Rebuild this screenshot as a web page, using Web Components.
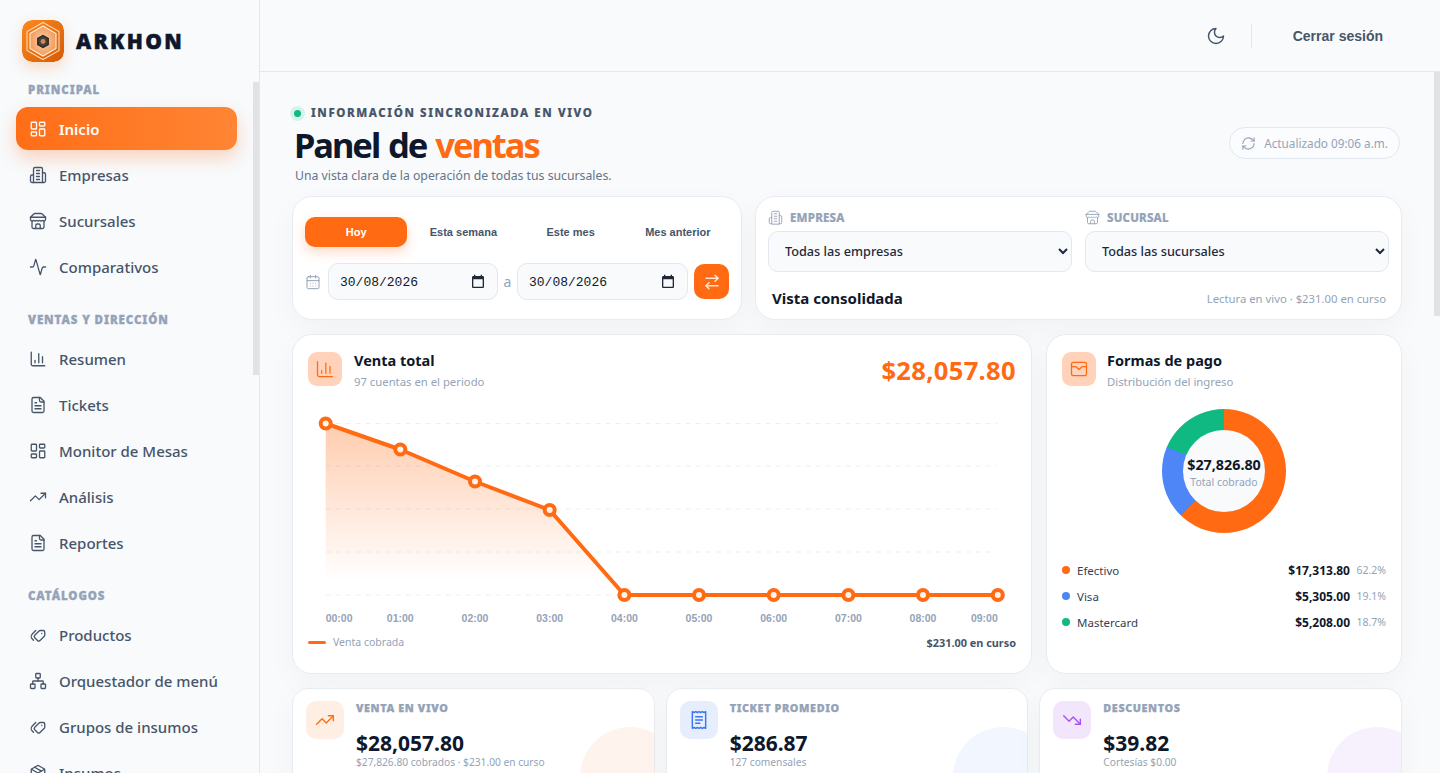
<!DOCTYPE html>
<html lang="es-MX">
<head>
<meta charset="utf-8">
<title>Arkhon</title>
<style>
html,body{margin:0;height:100%;overflow:hidden;background:#f8fafc;font-family:"Noto Sans",sans-serif}
</style>
</head>
<body>
<app-shell>
  <side-nav slot="side">
    <nav-section label="PRINCIPAL">
      <nav-item icon="dash" active>Inicio</nav-item>
      <nav-item icon="building">Empresas</nav-item>
      <nav-item icon="store">Sucursales</nav-item>
      <nav-item icon="activity">Comparativos</nav-item>
    </nav-section>
    <nav-section label="VENTAS Y DIRECCIÓN">
      <nav-item icon="bars">Resumen</nav-item>
      <nav-item icon="file">Tickets</nav-item>
      <nav-item icon="dash">Monitor de Mesas</nav-item>
      <nav-item icon="up">Análisis</nav-item>
      <nav-item icon="file">Reportes</nav-item>
    </nav-section>
    <nav-section label="CATÁLOGOS">
      <nav-item icon="tags">Productos</nav-item>
      <nav-item icon="network">Orquestador de menú</nav-item>
      <nav-item icon="tags">Grupos de insumos</nav-item>
      <nav-item icon="package">Insumos</nav-item>
    </nav-section>
  </side-nav>
  <top-bar slot="top"></top-bar>
  <page-head></page-head>
  <filter-row>
    <date-filter slot="a"></date-filter>
    <scope-filter slot="b"></scope-filter>
  </filter-row>
  <chart-row>
    <sales-chart slot="a"></sales-chart>
    <pay-donut slot="b"></pay-donut>
  </chart-row>
  <kpi-row>
    <kpi-card label="VENTA EN VIVO" value="$28,057.80" sub="$27,826.80 cobrados · $231.00 en curso" icon="up" color="#f97316" tint="#ffeee3" blob="#fff4ed"></kpi-card>
    <kpi-card label="TICKET PROMEDIO" value="$286.87" sub="127 comensales" icon="receipt" color="#3b76f0" tint="#e6eefd" blob="#f2f6fe"></kpi-card>
    <kpi-card label="DESCUENTOS" value="$39.82" sub="Cortesías $0.00" icon="down" color="#a855f7" tint="#f1e6fc" blob="#f7f1fd"></kpi-card>
  </kpi-row>
</app-shell>

<script>
const ICONS={
dash:'<rect x="3" y="3" width="7" height="9" rx="1"/><rect x="14" y="3" width="7" height="5" rx="1"/><rect x="14" y="12" width="7" height="9" rx="1"/><rect x="3" y="16" width="7" height="5" rx="1"/>',
building:'<path d="M6 22V4a2 2 0 0 1 2-2h8a2 2 0 0 1 2 2v18Z"/><path d="M6 12H4a2 2 0 0 0-2 2v6a2 2 0 0 0 2 2h2"/><path d="M18 9h2a2 2 0 0 1 2 2v9a2 2 0 0 1-2 2h-2"/><path d="M10 6h4"/><path d="M10 10h4"/><path d="M10 14h4"/><path d="M10 18h4"/>',
store:'<path d="m2 7 4.41-4.41A2 2 0 0 1 7.83 2h8.34a2 2 0 0 1 1.42.59L22 7"/><path d="M4 12v8a2 2 0 0 0 2 2h12a2 2 0 0 0 2-2v-8"/><path d="M15 22v-4a2 2 0 0 0-2-2h-2a2 2 0 0 0-2 2v4"/><path d="M2 7h20"/><path d="M22 7v3a2 2 0 0 1-2 2a2.7 2.7 0 0 1-1.59-.63.7.7 0 0 0-.82 0A2.7 2.7 0 0 1 16 12a2.7 2.7 0 0 1-1.59-.63.7.7 0 0 0-.82 0A2.7 2.7 0 0 1 12 12a2.7 2.7 0 0 1-1.59-.63.7.7 0 0 0-.82 0A2.7 2.7 0 0 1 8 12a2.7 2.7 0 0 1-1.59-.63.7.7 0 0 0-.82 0A2.7 2.7 0 0 1 4 12a2 2 0 0 1-2-2V7"/>',
activity:'<path d="M22 12h-2.48a2 2 0 0 0-1.93 1.46l-2.35 8.36a.25.25 0 0 1-.48 0L9.24 2.18a.25.25 0 0 0-.48 0l-2.35 8.36A2 2 0 0 1 4.49 12H2"/>',
bars:'<path d="M3 3v16a2 2 0 0 0 2 2h16"/><path d="M18 17V9"/><path d="M13 17V5"/><path d="M8 17v-3"/>',
file:'<path d="M15 2H6a2 2 0 0 0-2 2v16a2 2 0 0 0 2 2h12a2 2 0 0 0 2-2V7Z"/><path d="M14 2v4a2 2 0 0 0 2 2h4"/><path d="M10 9H8"/><path d="M16 13H8"/><path d="M16 17H8"/>',
up:'<path d="M22 7 13.5 15.5 8.5 10.5 2 17"/><path d="M16 7h6v6"/>',
down:'<path d="M22 17 13.5 8.5 8.5 13.5 2 7"/><path d="M16 17h6v-6"/>',
tags:'<g transform="matrix(-1 0 0 1 24 0)"><path d="M3 8v4.172a2 2 0 0 0 .586 1.414l5.71 5.71a2.41 2.41 0 0 0 3.408 0l3.592-3.592a2.41 2.41 0 0 0 0-3.408l-5.71-5.71A2 2 0 0 0 9.172 6H5a2 2 0 0 0-2 2z"/><path d="m18 19 1.592-1.592a4.82 4.82 0 0 0 0-6.816L15 6"/><path d="M7 10h-.01"/></g>',
network:'<rect x="16" y="16" width="6" height="6" rx="1"/><rect x="2" y="16" width="6" height="6" rx="1"/><rect x="9" y="2" width="6" height="6" rx="1"/><path d="M5 16v-3a1 1 0 0 1 1-1h12a1 1 0 0 1 1 1v3"/><path d="M12 12V8"/>',
package:'<path d="M11 21.73a2 2 0 0 0 2 0l7-4A2 2 0 0 0 21 16V8a2 2 0 0 0-1-1.73l-7-4a2 2 0 0 0-2 0l-7 4A2 2 0 0 0 3 8v8a2 2 0 0 0 1 1.73z"/><path d="M12 22V12"/><path d="M3.29 7 12 12l8.71-5"/><path d="m7.5 4.27 9 5.15"/>',
moon:'<path d="M12 3a6 6 0 0 0 9 9 9 9 0 1 1-9-9Z"/>',
refresh:'<path d="M3 12a9 9 0 0 1 9-9 9.75 9.75 0 0 1 6.74 2.74L21 8"/><path d="M21 3v5h-5"/><path d="M21 12a9 9 0 0 1-9 9 9.75 9.75 0 0 1-6.74-2.74L3 16"/><path d="M8 16H3v5"/>',
swap:'<path d="m16 3 4 4-4 4"/><path d="M20 7H4"/><path d="m8 21-4-4 4-4"/><path d="M4 17h16"/>',
calendar:'<path d="M8 2v4"/><path d="M16 2v4"/><rect x="3" y="4" width="18" height="18" rx="2"/><path d="M3 10h18"/><path d="M8 14h.01"/><path d="M12 14h.01"/><path d="M16 14h.01"/><path d="M8 18h.01"/><path d="M12 18h.01"/><path d="M16 18h.01"/>',
receipt:'<path d="M4 2v20l2-1 2 1 2-1 2 1 2-1 2 1 2-1 2 1V2l-2 1-2-1-2 1-2-1-2 1-2-1-2 1Z"/><path d="M16 8H8"/><path d="M16 12H8"/><path d="M13 16H8"/>',
wallet:'<rect x="3" y="4" width="18" height="16" rx="2"/><path d="M3 9h5l4 3.5L16 9h5"/>'
};
function def(name,html,extra){
  const tpl=document.createElement('template');tpl.innerHTML=html;
  class C extends HTMLElement{
    constructor(){super();this.attachShadow({mode:'open'}).appendChild(tpl.content.cloneNode(true));}
    connectedCallback(){if(extra)extra.call(this,this.shadowRoot);}
  }
  customElements.define(name,C);
}
customElements.define('x-icon',class extends HTMLElement{
  constructor(){super();this.attachShadow({mode:'open'});}
  connectedCallback(){
    const s=this.getAttribute('size')||18,w=this.getAttribute('stroke')||2;
    this.shadowRoot.innerHTML=`<style>:host{display:inline-flex;flex:none;width:${s}px;height:${s}px;line-height:0}svg{width:100%;height:100%}</style><svg viewBox="0 0 24 24" fill="none" stroke="currentColor" stroke-width="${w}" stroke-linecap="round" stroke-linejoin="round">${ICONS[this.getAttribute('name')]||''}</svg>`;
  }
});

const CARD=`background:#fff;border:1px solid #e8ecf1;border-radius:20px;box-shadow:0 10px 30px rgba(15,23,42,.035);box-sizing:border-box;`;
const THUMB=`position:absolute;right:0;width:6px;background:#e0e2e6;display:block;`;

def('app-shell',`<style>
:host{display:grid;grid-template-columns:260px minmax(0,1fr);grid-template-rows:72px minmax(0,1fr);height:100vh;background:#f9fafc;color:#0f172a}
.side{grid-row:1/3;min-height:0}
.scroll{overflow:hidden;min-height:0;position:relative}
.thumb{${THUMB}top:0;height:244px}
.content{box-sizing:border-box;padding:32px 38px 32px 32px;display:flex;flex-direction:column;gap:14px}
</style>
<div class="side"><slot name="side"></slot></div>
<slot name="top"></slot>
<div class="scroll"><div class="content"><slot></slot></div><span class="thumb"></span></div>`);

def('side-nav',`<style>
:host{display:flex;flex-direction:column;height:100%;box-sizing:border-box;border-right:1px solid #e2e8f0;background:#f8fafc;overflow:hidden}
.brand{display:flex;gap:12px;padding:20px 0 0 22px;height:82px;box-sizing:border-box;flex:none;align-items:flex-start}
.mark{width:42px;height:42px;border-radius:10px;box-shadow:0 6px 14px rgba(249,115,22,.22);flex:none;display:block}
.name{font-weight:900;font-size:21px;letter-spacing:2.3px;color:#0f172a;line-height:42px;-webkit-text-stroke:.5px #0f172a}
.nav{flex:1;min-height:0;overflow:hidden;position:relative}
.thumb{${THUMB}top:0;height:293px}
.in{padding:0 16px;box-sizing:border-box;width:253px}
</style>
<div class="brand">
<svg class="mark" viewBox="0 0 42 42"><defs><linearGradient id="lg" x1="0" y1="0" x2="1" y2="1"><stop offset="0" stop-color="#fb8a1e"/><stop offset="1" stop-color="#d65a06"/></linearGradient><radialGradient id="rg"><stop offset="0" stop-color="#f8d3b4"/><stop offset="1" stop-color="#f59a58"/></radialGradient></defs>
<rect width="42" height="42" rx="10" fill="url(#lg)"/>
<path d="M21 2.5 37 11.5V30.5L21 39.5 5 30.5V11.5Z" fill="none" stroke="#ffd7b0" stroke-width="1.1"/>
<path d="M21 6 34 13.5V28.5L21 36 8 28.5V13.5Z" fill="url(#rg)" stroke="#fff1e2" stroke-width="1.1"/>
<path d="M21 15.5 26.2 18.5V24.5L21 27.5 15.8 24.5V18.5Z" fill="#4b4038" stroke="#2c2520" stroke-width="1.4"/>
<circle cx="21" cy="21.5" r="2.4" fill="#c98a5e"/></svg>
<span class="name">ARKHON</span></div>
<div class="nav"><div class="in"><slot></slot></div><span class="thumb"></span></div>`);

customElements.define('nav-section',class extends HTMLElement{
  constructor(){super();const r=this.attachShadow({mode:'open'});
    r.innerHTML=`<style>:host{display:block;margin-bottom:24px}
    .l{font-weight:900;font-size:11.5px;letter-spacing:.9px;color:#94a3b8;padding-left:12px;height:14px;line-height:15px;-webkit-text-stroke:.3px #94a3b8}
    .g{display:flex;flex-direction:column;gap:4px;margin-top:12px}</style>
    <div class="l"></div><div class="g"><slot></slot></div>`;}
  connectedCallback(){this.shadowRoot.querySelector('.l').textContent=this.getAttribute('label');}
});
customElements.define('nav-item',class extends HTMLElement{
  constructor(){super();this.attachShadow({mode:'open'});}
  connectedCallback(){const a=this.hasAttribute('active');
    this.shadowRoot.innerHTML=`<style>:host{display:flex;align-items:center;gap:12px;height:42px;box-sizing:border-box;padding-left:13px;border-radius:12px;font-size:15px;font-weight:500;color:${a?'#fff':'#475569'};${a?'background:linear-gradient(90deg,#ff6e17,#ff8534);box-shadow:0 8px 18px rgba(255,107,20,.28);font-weight:600;height:43px;margin-top:-1px;':''}}</style><x-icon name="${this.getAttribute('icon')}" size="18" stroke="1.75"></x-icon><span><slot></slot></span>`;}
});

def('top-bar',`<style>
:host{display:flex;align-items:center;justify-content:flex-end;height:72px;box-sizing:border-box;border-bottom:1px solid #e2e8f0;background:#f9fafc;padding-right:57px;color:#475569}
.d{width:1px;height:24px;background:#e2e8f0;margin:0 41px 0 25px}
button{all:unset;font:700 14px "Liberation Sans",sans-serif;color:#475569;line-height:16px;padding-top:1px}
x-icon{color:#475569}
</style><x-icon name="moon" size="20" stroke="1.75"></x-icon><span class="d"></span><button>Cerrar sesión</button>`);

def('page-head',`<style>
:host{display:flex;justify-content:space-between;align-items:flex-start;height:79px;margin-bottom:-1px}
.eb{display:flex;align-items:center;gap:8px;font-weight:800;font-size:11.5px;letter-spacing:1.6px;color:#475569;line-height:16px;height:16px;margin-top:1px;-webkit-text-stroke:.2px #475569}
.dot{width:7px;height:7px;border-radius:50%;background:#10b981;box-shadow:0 0 0 4px #d5f3e8;margin-left:2px;margin-right:2px}
h1{margin:6px 0 0 2px;font-size:34.5px;font-weight:700;letter-spacing:-2.05px;word-spacing:2px;line-height:36px;color:#0f172a}
h1 b{color:#ff6a13;font-weight:700}
p{margin:4px 0 0 3px;font-size:12.25px;color:#64748b;line-height:18px}
.pill{display:flex;align-items:center;gap:8px;height:32px;box-sizing:border-box;border:1px solid #e2e8f0;border-radius:16px;padding:0 11px;font-size:11.75px;color:#94a3b8;margin:23px 2px 0 0;background:#fbfcfd}
</style>
<div><div class="eb"><span class="dot"></span>INFORMACIÓN SINCRONIZADA EN VIVO</div><h1>Panel de <b>ventas</b></h1><p>Una vista clara de la operación de todas tus sucursales.</p></div>
<div class="pill"><x-icon name="refresh" size="15" stroke="1.75"></x-icon>Actualizado 09:06 a.m.</div>`);

def('filter-row',`<style>:host{display:grid;grid-template-columns:450px 1fr;gap:13px}</style><slot name="a"></slot><slot name="b"></slot>`);
def('chart-row',`<style>:host{display:grid;grid-template-columns:740px 1fr;gap:14px}</style><slot name="a"></slot><slot name="b"></slot>`);
def('kpi-row',`<style>:host{display:grid;grid-template-columns:repeat(3,1fr);gap:11px}</style><slot></slot>`);

customElements.define('date-field',class extends HTMLElement{
  constructor(){super();this.attachShadow({mode:'open'}).innerHTML=`<style>
  :host{display:flex;align-items:center;justify-content:space-between;box-sizing:border-box;height:37px;width:170px;border:1px solid #e2e8f0;border-radius:10px;background:#f8fafc;padding:0 11px;font:13px "Liberation Mono",monospace;color:#0f172a}
  svg{width:16px;height:16px;display:block;flex:none}
  span{padding-top:1px}
  </style><span><slot></slot></span><svg viewBox="0 0 24 24"><path fill="#1f2937" d="M19 3h-1V1h-2v2H8V1H6v2H5c-1.11 0-1.99.9-1.99 2L3 19c0 1.1.89 2 2 2h14c1.1 0 2-.9 2-2V5c0-1.1-.9-2-2-2zm0 16H5V8h14v11z"/></svg>`;}
});

def('date-filter',`<style>
:host{display:block;${CARD}height:124px;padding:20px 12px;}
.tabs{display:grid;grid-template-columns:repeat(4,1fr);gap:5px;height:30px}
.t{all:unset;text-align:center;font:700 11px/30px "Liberation Sans",sans-serif;color:#475569;border-radius:10px}
.t.on{background:#ff6a13;color:#fff;box-shadow:0 5px 12px rgba(255,106,19,.25)}
.row{display:flex;align-items:center;margin-top:16px;height:37px}
x-icon{color:#94a3b8;margin-right:7px}
.a{width:19px;text-align:center;color:#94a3b8;font-size:14px}
.go{all:unset;margin-left:6px;width:35px;height:35px;border-radius:10px;background:#ff6a13;color:#fff;display:flex;align-items:center;justify-content:center}
.go x-icon{color:#ffe6d5;margin:0}
</style>
<div class="tabs"><button class="t on">Hoy</button><button class="t">Esta semana</button><button class="t">Este mes</button><button class="t">Mes anterior</button></div>
<div class="row"><x-icon name="calendar" size="16" stroke="1.5"></x-icon><date-field>30/08/2026</date-field><span class="a">a</span><date-field style="width:171px">30/08/2026</date-field><button class="go"><x-icon name="swap" size="18" stroke="2"></x-icon></button></div>`);

def('scope-filter',`<style>
:host{display:block;${CARD}height:124px;padding:11px 12px 0}
.g{display:grid;grid-template-columns:1fr 1fr;gap:13px}
.lab{display:flex;align-items:center;gap:7px;font-weight:800;font-size:11.5px;color:#94a3b8;height:18px;letter-spacing:.2px;-webkit-text-stroke:.2px #94a3b8}
select{display:block;width:100%;height:41px;margin-top:5px;box-sizing:border-box;border:1px solid #e2e8f0;border-radius:10px;background:#f8fafc;padding:0 12px 2px;font:500 12.7px "Noto Sans",sans-serif;color:#1e293b;outline:none}
.foot{display:flex;justify-content:space-between;align-items:center;margin:14px 3px 0 4px;height:24px}
b{font-size:15px;font-weight:700;color:#0f172a}
span.s{font-size:11.3px;color:#94a3b8}
</style>
<div class="g"><div><div class="lab"><x-icon name="building" size="15" stroke="1.5"></x-icon>EMPRESA</div><select><option>Todas las empresas</option></select></div>
<div><div class="lab"><x-icon name="store" size="15" stroke="1.5"></x-icon>SUCURSAL</div><select><option>Todas las sucursales</option></select></div></div>
<div class="foot"><b>Vista consolidada</b><span class="s">Lectura en vivo · $231.00 en curso</span></div>`);

const HEAD=`.h{display:flex;gap:12px}.ic{width:34px;height:34px;border-radius:9px;background:#ffd2b9;color:#ff6a13;display:flex;align-items:center;justify-content:center;flex:none}
.tt{font-size:14.5px;font-weight:700;line-height:18px;color:#0f172a;margin-top:-1px}.st{font-size:11.3px;color:#94a3b8;line-height:16px;margin-top:5px}`;

def('sales-chart',`<style>
:host{display:block;${CARD}height:340px;padding:17px 15px 0;position:relative}
${HEAD}
.top{display:flex;justify-content:space-between;align-items:flex-start}
.amt{font-size:25.5px;font-weight:700;color:#ff6a13;line-height:36px;height:34px;letter-spacing:.35px}
svg.c{display:block;margin-top:14px;width:708px;height:224px;overflow:visible}
.lg{display:flex;justify-content:space-between;align-items:center;font-size:10.5px;color:#94a3b8;margin-top:6px;height:16px}
.k{display:flex;align-items:center;gap:7px}.k i{width:18px;height:3px;border-radius:2px;background:#ff6a13;display:block}
.r{font-weight:700;color:#475569;font-size:10.9px}
text{font:700 10.5px "Liberation Sans",sans-serif;fill:#94a3b8}
</style>
<div class="top"><div class="h"><span class="ic"><x-icon name="bars" size="20" stroke="1.5"></x-icon></span><div><div class="tt">Venta total</div><div class="st">97 cuentas en el periodo</div></div></div><div class="amt">$28,057.80</div></div>
<svg class="c" viewBox="0 0 708 224"></svg>
<div class="lg"><span class="k"><i></i>Venta cobrada</span><span class="r">$231.00 en curso</span></div>`,function(r){
  const s=r.querySelector('svg.c');
  const ox=308,oy=404;
  const xs=[325.7,400.3,475,549.7,624.4,699,773.7,848.4,923,997.8].map(x=>x-ox);
  const ys=[423.5,449.5,481.5,510,595,595,595,595,595,595].map(y=>y-oy);
  const pts=xs.map((x,i)=>x+','+ys[i]).join(' ');
  let h=`<defs><linearGradient id="ag" x1="0" y1="0" x2="0" y2="1"><stop offset="0" stop-color="#ff6a13" stop-opacity=".34"/><stop offset=".92" stop-color="#ff6a13" stop-opacity="0"/></linearGradient></defs>`;
  [423.5,466,509,552,595].forEach(y=>{h+=`<line x1="${xs[0]}" x2="${xs[9]}" y1="${y-oy}" y2="${y-oy}" stroke="#eceff3" stroke-dasharray="5 5"/>`});
  h+=`<polygon points="${xs[0]},${ys[0]} ${pts} ${xs[9]},${595-oy} ${xs[0]},${595-oy}" fill="url(#ag)"/>`;
  h+=`<polyline points="${pts}" fill="none" stroke="#ff6a13" stroke-width="4" stroke-linejoin="round"/>`;
  xs.forEach((x,i)=>{h+=`<circle cx="${x}" cy="${ys[i]}" r="5" fill="#fff3ea" stroke="#ff6a13" stroke-width="4"/>`});
  ['00:00','01:00','02:00','03:00','04:00','05:00','06:00','07:00','08:00','09:00'].forEach((t,i)=>{
    const a=i==0?'start':i==9?'end':'middle';
    h+=`<text x="${xs[i]}" y="${618-oy+4}" text-anchor="${a}">${t}</text>`});
  s.innerHTML=h;
});

def('pay-donut',`<style>
:host{display:block;${CARD}height:340px;padding:17px 15px 0}
${HEAD}
.h{gap:11px}
.d{width:124px;height:124px;border-radius:50%;margin:19px auto 0;background:conic-gradient(#ff6a13 0 62.2%,#4f86f7 62.2% 81.3%,#10b981 81.3% 100%);display:flex;align-items:center;justify-content:center}
.i{width:82px;height:82px;box-sizing:border-box;padding-top:4px;border-radius:50%;background:#f8fafc;display:flex;flex-direction:column;align-items:center;justify-content:center;white-space:nowrap}
.v{font-size:14.3px;font-weight:700;color:#0f172a;line-height:18px;margin-top:-2px}.l{font-size:10.5px;color:#94a3b8;line-height:14px;margin-top:1px}
.rows{margin-top:24px;display:flex;flex-direction:column}
.rw{display:flex;align-items:center;height:26px;font-size:11.5px;color:#334155}
.rw i{width:8px;height:8px;border-radius:50%;margin-right:7px}
.rw b{margin-left:auto;color:#0f172a;font-size:12px;font-weight:700}
.rw span.p{width:36px;text-align:right;font-size:10.5px;color:#94a3b8}
</style>
<div class="h"><span class="ic"><x-icon name="wallet" size="20" stroke="1.5"></x-icon></span><div><div class="tt">Formas de pago</div><div class="st">Distribución del ingreso</div></div></div>
<div class="d"><div class="i"><div class="v">$27,826.80</div><div class="l">Total cobrado</div></div></div>
<div class="rows">
<div class="rw"><i style="background:#ff6a13"></i>Efectivo<b>$17,313.80</b><span class="p">62.2%</span></div>
<div class="rw"><i style="background:#4f86f7"></i>Visa<b>$5,305.00</b><span class="p">19.1%</span></div>
<div class="rw"><i style="background:#10b981"></i>Mastercard<b>$5,208.00</b><span class="p">18.7%</span></div>
</div>`);

customElements.define('kpi-card',class extends HTMLElement{
  constructor(){super();this.attachShadow({mode:'open'});}
  connectedCallback(){const g=n=>this.getAttribute(n);
    this.shadowRoot.innerHTML=`<style>
    :host{display:flex;gap:12px;${CARD}height:130px;padding:12px 13px;position:relative;overflow:hidden;border-radius:16px}
    .ic{width:38px;height:38px;border-radius:10px;background:${g('tint')};color:${g('color')};display:flex;align-items:center;justify-content:center;flex:none}
    .l{font-weight:900;font-size:10.8px;letter-spacing:.6px;color:#94a3b8;line-height:14px;-webkit-text-stroke:.25px #94a3b8}
    .v{font-size:21px;font-weight:700;color:#0f172a;line-height:26px;margin-top:15px}
    .s{font-size:10.2px;color:#94a3b8;line-height:14px;margin-top:-1px}
    .b{position:absolute;width:100px;height:100px;border-radius:50%;background:${g('blob')};right:-26px;top:38px}
    .t{position:relative}
    </style><span class="b"></span><span class="ic"><x-icon name="${g('icon')}" size="20" stroke="1.75"></x-icon></span><div class="t"><div class="l">${g('label')}</div><div class="v">${g('value')}</div><div class="s">${g('sub')}</div></div>`;}
});
</script>
</body>
</html>
